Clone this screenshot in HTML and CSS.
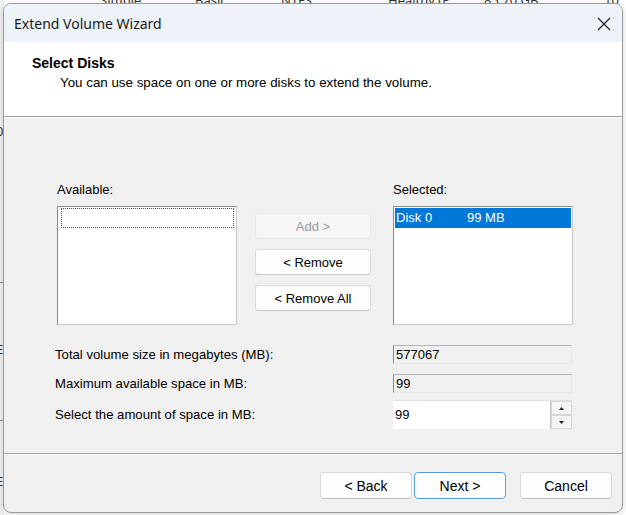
FILE: index.html
```html
<!DOCTYPE html>
<html>
<head>
<meta charset="utf-8">
<link rel="stylesheet" href="styles.css">
</head>
<body>
<div class="desktop">
  <div class="bg-text">
    <span class="bg-cell c1">Simple</span>
    <span class="bg-cell c2">Basic</span>
    <span class="bg-cell c3">NTFS</span>
    <span class="bg-cell c4">Healthy (P</span>
    <span class="bg-cell c5">85.70 GB</span>
    <span class="bg-cell c6">10</span>
  </div>
  <div class="bg-left">
    <span class="bg-letter l1">0</span>
    <span class="bg-letter l2">E</span>
    <span class="bg-letter l3">E</span>
    <span class="bg-line h1"></span>
    <span class="bg-line h2"></span>
  </div>

  <div class="dialog">
    <div class="titlebar">
      <span class="title">Extend Volume Wizard</span>
      <svg class="close" width="14" height="14" viewBox="0 0 14 14"><path d="M1 1 L13 13 M13 1 L1 13" stroke="#1a1a1a" stroke-width="1.1" fill="none"/></svg>
    </div>
    <div class="header">
      <div class="h-title">Select Disks</div>
      <div class="h-desc">You can use space on one or more disks to extend the volume.</div>
    </div>
    <div class="content">
      <div class="lists">
        <div class="col">
          <div class="lbl">Available:</div>
          <div class="listbox"><div class="focus-item"></div></div>
        </div>
        <div class="mid">
          <button class="btn" disabled>Add &gt;</button>
          <button class="btn">&lt; Remove</button>
          <button class="btn">&lt; Remove All</button>
        </div>
        <div class="col">
          <div class="lbl">Selected:</div>
          <div class="listbox"><div class="sel-item"><span class="disk">Disk 0</span><span>99 MB</span></div></div>
        </div>
      </div>
      <div class="fields">
        <div class="frow r1"><span class="flbl">Total volume size in megabytes (MB):</span><div class="ro">577067</div></div>
        <div class="frow r2"><span class="flbl">Maximum available space in MB:</span><div class="ro">99</div></div>
        <div class="frow r3"><span class="flbl">Select the amount of space in MB:</span>
          <div class="spin">
            <div class="spin-val">99</div>
            <div class="spin-btns">
              <div class="sb"><svg width="5" height="3" viewBox="0 0 5 3"><path d="M2.5 0 L5 3 L0 3 Z" fill="#222"/></svg></div>
              <div class="sb"><svg width="5" height="3" viewBox="0 0 5 3"><path d="M0 0 L5 0 L2.5 3 Z" fill="#222"/></svg></div>
            </div>
          </div>
        </div>
      </div>
    </div>
    <div class="footer">
      <button class="fbtn">&lt; Back</button>
      <button class="fbtn default">Next &gt;</button>
      <button class="fbtn cancel">Cancel</button>
    </div>
  </div>
</div>
</body>
</html>
```

FILE: styles.css
```css
* { box-sizing: border-box; }
html, body { margin: 0; padding: 0; }
body {
  width: 626px;
  height: 515px;
  overflow: hidden;
  background: #ffffff;
  font-family: "Liberation Sans", Arial, sans-serif;
}
.desktop {
  position: relative;
  width: 626px;
  height: 515px;
  background: #ffffff;
}
.bg-text {
  position: absolute;
  left: 0; top: -9px;
  width: 626px; height: 14px;
  font-family: "Noto Sans", sans-serif;
  font-size: 13px;
  color: #333;
}
.bg-cell { position: absolute; top: 0; }
.c1 { left: 100px; } .c2 { left: 195px; } .c3 { left: 281px; }
.c4 { left: 388px; } .c5 { left: 484px; } .c6 { left: 604px; }
.bg-left {
  position: absolute; left: 0; top: 0; width: 4px; height: 515px;
  background: #f0f0f0;
}
.bg-letter { position: absolute; left: -4px; font-size: 13px; color: #333; font-family: "Noto Sans", sans-serif; }
.l1 { top: 122px; } .l2 { top: 340px; } .l3 { top: 472px; }
.bg-line { position: absolute; left: 0; width: 4px; height: 1px; background: #888; }
.h1 { top: 282px; } .h2 { top: 420px; }

.dialog {
  position: absolute;
  left: 3px; top: 3px;
  width: 620px; height: 510px;
  border: 1px solid #9a9a9a;
  border-radius: 8px;
  overflow: hidden;
  background: #f0f0f0;
  display: flex;
  flex-direction: column;
  box-shadow: 0 2px 6px rgba(0,0,0,0.15);
}
.titlebar {
  height: 38px;
  flex: none;
  background: #eef2f9;
  display: flex;
  align-items: center;
  justify-content: space-between;
  padding: 0 11px 0 10px;
}
.title {
  font-family: "Noto Sans", sans-serif;
  font-size: 14px;
  color: #1a1a1a;
}
.close { display: block; margin-top: 1px; }

.header {
  height: 75px;
  flex: none;
  background: #ffffff;
  border-bottom: 1px solid #a0a0a0;
  padding: 13px 0 0 28px;
  font-size: 13px;
  color: #000;
}
.h-title { font-weight: bold; font-size: 14px; line-height: 16px; }
.h-desc { margin-top: 4px; padding-left: 28px; line-height: 16px; font-size: 13.35px; }

.content {
  height: 337px;
  flex: none;
  border-top: 1px solid #ffffff;
  border-bottom: 1px solid #a0a0a0;
  padding: 64px 0 0 53px;
  font-size: 13px;
  color: #000;
}
.lists { display: flex; align-items: flex-start; }
.col { width: 180px; display: flex; flex-direction: column; }
.lbl { line-height: 16px; height: 16px; margin-bottom: 8px; }
.listbox {
  height: 119px;
  background: #fff;
  border: 1px solid #8a8a8a;
  border-right-color: #c8c8c8;
  border-bottom-color: #c8c8c8;
  padding: 1px;
}
.focus-item {
  margin: 0 1px 0 2px;
  height: 20px;
  border: 1px dotted #555;
}
.sel-item {
  height: 20px;
  background: #0078d7;
  color: #fff;
  display: flex;
  align-items: center;
  padding-left: 1px;
  line-height: 20px;
}
.disk { width: 71px; }
.mid {
  width: 116px;
  margin: 31px 22px 0 18px;
  display: flex;
  flex-direction: column;
  gap: 10px;
}
.btn {
  height: 26px;
  font-family: "Liberation Sans", Arial, sans-serif;
  font-size: 13px;
  color: #000;
  background: #fdfdfd;
  border: 1px solid #dcdcdc;
  border-bottom-color: #c4c4c4;
  border-radius: 3px;
  padding: 0;
}
.btn:disabled { background: #f6f6f6; color: #9a9a9a; border-color: #e8e8e8; }

.fields {
  margin-top: 20px;
  margin-left: -2px;
  display: flex;
  flex-direction: column;
}
.frow { display: flex; align-items: center; justify-content: space-between; width: 517px; }
.r2 { margin-top: 10px; }
.r3 { margin-top: 7px; }
.flbl { line-height: 16px; font-size: 13.15px; }
.ro {
  width: 179px; height: 19px;
  background: #f0f0f0;
  border-top: 1px solid #b4b4b4;
  border-left: 1px solid #8a8a8a;
  border-right: 1px solid #e8e8e8;
  border-bottom: 1px solid #e8e8e8;
  padding-left: 2px;
  line-height: 17px;
}
.spin {
  width: 179px; height: 29px;
  background: #fff;
  display: flex;
  border-top: 1px solid #e0e0e0;
}
.spin-val { flex: 1; padding-left: 2px; line-height: 27px; }
.spin-btns { width: 22px; display: flex; flex-direction: column; border-left: 1px solid #c8c8c8; }
.sb {
  flex: 1;
  background: #f4f4f4;
  border: 1px solid #d6d6d6;
  display: flex; align-items: center; justify-content: center;
}
.sb svg { display: block; }

.footer {
  flex: 1;
  border-top: 1px solid #ffffff;
  display: flex;
  align-items: flex-start;
  padding: 17px 0 0 316px;
}
.fbtn {
  width: 92px; height: 27px;
  font-family: "Liberation Sans", Arial, sans-serif;
  font-size: 14px;
  color: #000;
  background: #fdfdfd;
  border: 1px solid #d8d8d8;
  border-bottom-color: #c0c0c0;
  border-radius: 4px;
  padding: 0;
  margin-right: 2px;
}
.fbtn.default { border-color: #5b9bd5; }
.fbtn.cancel { margin-left: 12px; }
```
